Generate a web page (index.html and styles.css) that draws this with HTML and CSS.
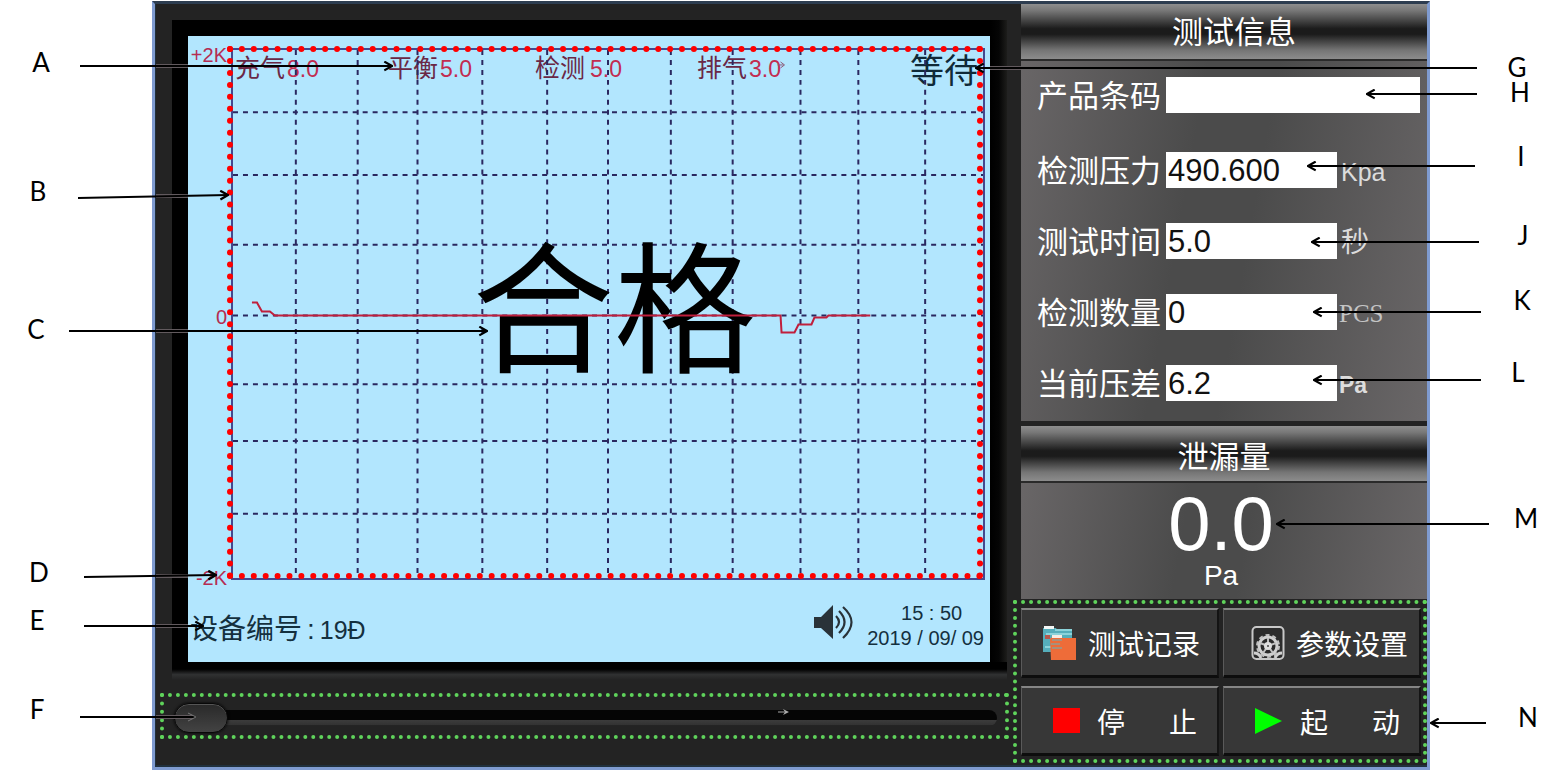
FILE: index.html
```html
<!DOCTYPE html>
<html lang="zh-CN">
<head>
<meta charset="utf-8">
<meta name="viewport" content="width=device-width, initial-scale=1">
<title>测试信息</title>
<link rel="stylesheet" href="styles.css">
</head>
<body>
<main class="figure">
  <div class="device">
    <section class="monitor">
      <div class="bezel">
        <div class="screen">
          <div class="axis"><span>+2K</span><span>0</span><span>-2K</span></div>
          <div class="plot">
            <svg class="plot-layer" viewBox="0 0 752 530" preserveAspectRatio="none" aria-hidden="true">
              <path class="dash" d="M63 0V530M125 0V530M185 0V530M250 0V530M315 0V530M376 0V530M439 0V530M501 0V530M569 0V530M627 0V530M694 0V530"/>
              <path class="dash" d="M0 62.500H752M0 125.500H752M0 195.500H752M0 266.500H752M0 335.500H752M0 392.500H752M0 465.500H752"/>
            </svg>
            <div class="stages">
              <span>充气<b>8.0</b></span>
              <span>平衡<b>5.0</b></span>
              <span>检测<b class="spaced">5.0</b></span>
              <span>排气<b>3.0</b></span>
              <strong>等待</strong>
            </div>
            <div class="verdict">合格</div>
            <svg class="plot-layer" viewBox="0 0 752 530" preserveAspectRatio="none" aria-hidden="true">
              <path class="trace" d="M19 253.500H24L29 262.500H37L42 266.500H549L550 283.500H563L567 275.500H580L583 268.500H595L597 266.500H639"/>
              <path d="M546 15h6M549 12l4 3-4 3" fill="none" stroke="#8c5a78"/>
            </svg>
            <div class="red-dots"></div>
          </div>
          <footer class="status">
            <p class="serial">设备编号<b>:</b><b class="number">19Đ</b></p>
            <div class="status-right">
              <svg class="speaker" viewBox="0 0 42 36" aria-hidden="true">
                <path d="M1 13h7L20 1v34L8 24H1z" fill="#293238"/>
                <g fill="none" stroke="#293238" stroke-width="2.200"><path d="M23 12q6 6 0 12"/><path d="M26 7q11 11 0 22"/><path d="M30 3q17 15 0 31"/></g>
              </svg>
              <div class="clock"><time class="hour">15 : 50</time><time>2019 / 09/ 09</time></div>
            </div>
          </footer>
        </div>
      </div>
      <div class="scroll-zone">
        <input class="slider" type="range" min="0" max="100" value="0" aria-label="滑块">
        <svg class="mini-arrow" viewBox="0 0 12 8" aria-hidden="true"><path d="M0 4h8" stroke="#aaa"/><path d="M5 1l6 3-6 3 2-3z" fill="#aaa"/></svg>
      </div>
    </section>

    <section class="panel">
      <h2 class="heading">测试信息</h2>
      <form class="info">
        <div class="row barcode"><label for="code">产品条码</label><input id="code" type="text"></div>
        <div class="row"><label for="pressure">检测压力</label><input id="pressure" type="text" value="490.600"><span class="unit">Kpa</span></div>
        <div class="row"><label for="time">测试时间</label><input id="time" type="text" value="5.0"><span class="unit unit-cjk">秒</span></div>
        <div class="row"><label for="count">检测数量</label><input id="count" type="text" value="0"><span class="unit unit-serif">PCS</span></div>
        <div class="row"><label for="diff">当前压差</label><input id="diff" type="text" value="6.2"><span class="unit unit-bold">Pa</span></div>
      </form>
      <h2 class="heading second">泄漏量</h2>
      <div class="leak"><output>0.0</output><span>Pa</span></div>
      <div class="actions">
        <button type="button" class="records">
          <svg width="36" height="36" viewBox="0 0 36 36" aria-hidden="true">
            <path d="M1 3h13l1 2h15v22H1z" fill="#55aebb"/><path d="M2 1h10v3H2z" fill="#f3f6f5"/><path d="M13 5h17M4 9h26M3 22h8" stroke="#8bd3da" stroke-width="2"/><path d="M3 10h5v4H3z" fill="#b5594d"/>
            <path d="M8 14l2-2h9l2 1h13v22H9z" fill="#ee6c39"/><path d="M10 10h10v3H10z" fill="#f5ece4"/><path d="M10 15h10M9 19h9M10 23h10" stroke="#a8907c" stroke-width="2"/>
          </svg><span>测试记录</span>
        </button>
        <button type="button" class="settings">
          <svg width="34" height="36" viewBox="0 0 34 36" aria-hidden="true">
            <rect x="1.500" y="2" width="31" height="32" rx="4" fill="#2c2c2c" stroke="#c8c8c8" stroke-width="2"/>
            <path d="M3 28q5 0 7 5M31 28q-5 0-7 5" fill="none" stroke="#d0d0d0" stroke-width="3"/>
            <circle cx="17" cy="21" r="9" fill="#2a2a2a" stroke="#d0d0d0" stroke-width="3"/>
            <circle cx="17" cy="21" r="11" fill="none" stroke="#c0c0c0" stroke-width="2" stroke-dasharray="4 3"/>
            <path d="M17 21V13M17 21l8-3M17 21l5 7M17 21l-5 7M17 21l-8-3" stroke="#c0c0c0" stroke-width="2"/>
            <circle cx="17" cy="21" r="4" fill="#ddd"/><circle cx="17" cy="21" r="1" fill="#444"/>
          </svg><span>参数设置</span>
        </button>
        <button type="button" class="stop">
          <svg width="27" height="26" viewBox="0 0 27 26" aria-hidden="true"><rect width="27" height="25" fill="#f00"/></svg><span>停</span><span>止</span>
        </button>
        <button type="button" class="start">
          <svg width="28" height="28" viewBox="0 0 28 28" aria-hidden="true"><path d="M0 1l27 13L0 27z" fill="#0f0"/></svg><span>起</span><span>动</span>
        </button>
      </div>
    </section>
  </div>

  <svg class="callouts callouts-left" width="500" height="772" role="img" aria-label="A B C D E F">
    <defs><marker id="tip" viewBox="0 0 10 10" refX="9" refY="5" markerWidth="11" markerHeight="11" markerUnits="userSpaceOnUse" orient="auto"><path d="M2 1l7 4-7 4" fill="none" stroke="#000" stroke-width="2"/></marker>
    <marker id="tip-light" viewBox="0 0 10 10" refX="9" refY="5" markerWidth="10" markerHeight="10" markerUnits="userSpaceOnUse" orient="auto"><path d="M1 1l8 4-8 4" fill="none" stroke="#777"/></marker></defs>
    <path class="halo" d="M156 66H188M156 196H188M156 331H188M156 576H188M156 626H188M156 717H193"/>
    <path class="arrow" d="M80 66H392"/><path class="arrow" d="M78 198L228 195"/><path class="arrow" d="M69 331H487"/><path class="arrow" d="M84 577L216 575"/><path class="arrow" d="M84 626H203"/><path class="arrow light" d="M80 717H196"/>
    <text x="41" y="72">A</text><text x="38" y="201">B</text><text x="36" y="339">C</text><text x="39" y="582">D</text><text x="37" y="630">E</text><text x="37" y="719">F</text>
  </svg>
  <svg class="callouts callouts-right" width="600" height="772" role="img" aria-label="G H I J K L M N">
    <path class="halo" d="M24 68H55"/>
    <path class="arrow" d="M511 68H10"/><path class="arrow" d="M511 94H401"/><path class="arrow" d="M509 166H342"/><path class="arrow" d="M513 242H346"/><path class="arrow" d="M515 312H348"/><path class="arrow" d="M515 380H348"/><path class="arrow" d="M523 524H311"/><path class="arrow" d="M520 723H465"/>
    <text x="551" y="77">G</text><text x="554" y="102">H</text><text x="555" y="166">I</text><text x="557" y="245">J</text><text x="556" y="310">K</text><text x="552" y="382">L</text><text x="560" y="528">M</text><text x="562" y="727">N</text>
  </svg>
</main>
</body>
</html>
```
FILE: styles.css
```css
* { box-sizing: border-box; }
body { margin: 0; background: #fff; font-family: "Liberation Sans", "Noto Sans CJK SC", sans-serif; }
b { font-weight: 400; }

.figure { position: relative; padding: 1px 136px 2px 152px; overflow: hidden; }
.device {
  display: grid;
  grid-template-columns: 1fr 406px;
  border: 3px solid #7f9bd0;
  border-top-color: #2d3d50;
  background: #232323;
  box-shadow: inset 1px 0 #20303c, inset 0 -2px #20303c;
}

/* Display side */
.monitor { display: flex; flex-direction: column; padding-top: 16px; }
.bezel {
  flex: 1;
  display: flex;
  margin: 0 14px 0 17px;
  padding: 16px 17px 18px 16px;
  background: linear-gradient(#000 40%, #303132 70%, #232323) bottom / 100% 18px no-repeat, linear-gradient(to left, #1d1d1b, #050505 8px, #000 16px);
}
.screen {
  flex: 1;
  display: grid;
  grid-template: 1fr 82px / 43px 1fr;
  padding: 12px 5px 0 0;
  background: #b2e6fe;
}
.axis {
  display: flex;
  flex-direction: column;
  justify-content: space-between;
  align-items: flex-end;
  margin: -3px 4px -8px 0;
  color: #b52c52;
  font-size: 20px;
  line-height: 20px;
}
.plot { position: relative; display: flex; flex-direction: column; border: 2px solid #44488f; }
.stages {
  display: grid;
  grid-template-columns: 153fr 147fr 162fr 213fr 73fr;
  padding-left: 2px;
  color: #6a2846;
  font-size: 25px;
  line-height: 36px;
  white-space: nowrap;
}
.stages b { padding-left: 2px; color: #c22c50; font-size: 23px; }
.stages .spaced { padding-left: 5px; }
.stages strong { color: #102a38; font-size: 34px; font-weight: 400; line-height: 42px; }
.verdict {
  position: relative;
  flex: 1;
  display: grid;
  place-items: center;
  padding: 0 0 44px 12px;
  color: #000;
  font-size: 142px;
  font-weight: 400;
  line-height: 142px;
}
.plot-layer { position: absolute; inset: 0; width: 100%; height: 100%; }
.dash { fill: none; stroke: #2a2860; stroke-width: 2; stroke-dasharray: 5 5; }
.trace { fill: none; stroke: #c01f3c; stroke-width: 2; }
.red-dots { position: absolute; inset: -4px 0 -1px -6px; border: 6px dotted #f00; }

.status {
  grid-column: 1 / -1;
  display: flex;
  justify-content: space-between;
  align-items: center;
  padding: 10px 1px 0 2px;
  color: #14303e;
}
.serial { display: flex; gap: 5px; margin: 0; padding-top: 8px; font-size: 28px; line-height: 36px; }
.serial .number { font-size: 25px; }
.status-right { display: flex; align-items: center; gap: 12px; }
.speaker { width: 42px; height: 36px; margin-bottom: 8px; }
.clock { display: flex; flex-direction: column; align-items: center; font-size: 20px; line-height: 25px; white-space: nowrap; }
.clock .hour { padding-left: 12px; }

.scroll-zone {
  position: relative;
  display: flex;
  align-items: center;
  height: 46px;
  margin: 13px 12px 28px 5px;
  padding: 4px 8px 0 10px;
  border: 4px dotted #5fd35b;
}
.slider { flex: 1; height: 30px; margin: 0; background: none; appearance: none; }
.slider::-webkit-slider-runnable-track {
  height: 16px;
  border-radius: 8px;
  background: linear-gradient(#050505 60%, #3b3b3b 65%, #333 92%, #1a1a1a);
}
.slider::-webkit-slider-thumb {
  width: 54px;
  height: 30px;
  margin-top: -7px;
  appearance: none;
  border: 1px solid #080808;
  border-radius: 15px;
  background: linear-gradient(#292929, #434343);
  box-shadow: inset 0 1px #555, 0 0 3px #000;
}
.mini-arrow { position: absolute; left: 73%; top: 11px; width: 12px; height: 8px; }

/* Control side */
.heading {
  height: 57px;
  margin: 0;
  padding: 2px 0 0 20px;
  border-bottom: 2px solid #2a2a2a;
  background: linear-gradient(#8e8e8e, #777 12%, #1b1b1b 45%, #1b1b1b 55%, #757575 84%, #8c8c8c);
  color: #fff;
  font-size: 31px;
  font-weight: 400;
  line-height: 53px;
  text-align: center;
}
.heading.second { margin-top: 5px; padding: 5px 0 0; }
.info, .leak { background: linear-gradient(100deg, #696667, #4b4b4b 40%, #4b4b4b 55%, #6a6768); }
.info { display: flex; flex-direction: column; gap: 35px; padding: 16px 7px 20px 16px; }
.row { display: grid; grid-template: 36px / 129px 171px 1fr; align-items: center; color: #fff; }
.row.barcode { grid-template-columns: 129px 1fr; margin-bottom: 4px; }
.row label { padding-top: 4px; font-size: 31px; line-height: 32px; white-space: nowrap; }
.row input {
  width: 100%;
  height: 36px;
  padding: 2px 2px 0;
  border: 0;
  background: #fff;
  color: #111;
  font: 31px "Liberation Sans", sans-serif;
}
.unit { padding: 4px 0 0 4px; color: #dcdcdc; font-size: 25px; line-height: 32px; }
.unit-cjk { font-size: 28px; }
.unit-serif { padding-left: 2px; color: #c4c4c4; font-family: "Liberation Serif", serif; }
.unit-bold { padding-left: 2px; font-size: 23px; font-weight: 700; }
.leak { display: flex; flex-direction: column; align-items: center; padding: 3px 6px 9px 0; color: #fff; }
.leak output { font-size: 76px; line-height: 76px; }
.leak span { font-size: 28px; line-height: 28px; }
.actions {
  position: relative;
  display: grid;
  grid-template-columns: 1fr 1fr;
  gap: 8px 4px;
  padding: 9px 6px 11px 0;
}
.actions::after { content: ""; position: absolute; inset: 1px 0 4px -8px; border: 4px dotted #5fd35b; pointer-events: none; }
.actions button {
  display: flex;
  align-items: center;
  height: 70px;
  padding: 0 0 0 20px;
  border: solid;
  border-width: 2px 2px 3px 1px;
  border-color: #858585 #141414 #0d0d0d #5a5a5a;
  background: #373737;
  color: #fff;
  font: 28px "Noto Sans CJK SC", sans-serif;
  white-space: nowrap;
}
.actions .records { gap: 10px; }
.actions .settings { gap: 11px; padding-left: 27px; }
.actions .stop, .actions .start { gap: 17px; padding-left: 31px; }
.actions .stop span + span, .actions .start span + span { margin-left: 27px; }

/* Lettered callouts drawn over the device */
.callouts { position: absolute; top: 0; pointer-events: none; }
.callouts-left { left: 0; }
.callouts-right { right: 0; }
.callouts text { fill: #000; font: 26px Lato, sans-serif; text-anchor: middle; }
.arrow { fill: none; stroke: #000; stroke-width: 2; marker-end: url(#tip); }
.arrow.light { marker-end: url(#tip-light); }
.halo { fill: none; stroke: #625a5e; stroke-width: 4; }
```
